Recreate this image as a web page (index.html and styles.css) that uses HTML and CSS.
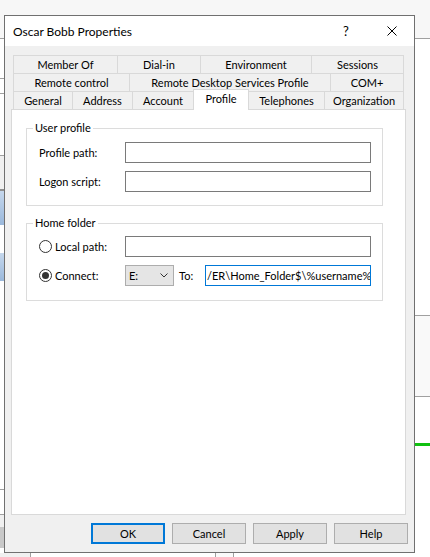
FILE: index.html
```html
<!DOCTYPE html>
<html>
<head>
<meta charset="utf-8">
<title>Oscar Bobb Properties</title>
<link rel="stylesheet" href="styles.css">
</head>
<body>
<div class="desktop">
  <div class="bg-top"></div>
  <div class="bg-right-band"></div>
  <div class="bg-green"></div>
  <div class="bg-left-a"></div>
  <div class="bg-left-b"></div>
  <div class="bg-left-blue1"></div>
  <div class="bg-left-blue2"></div>
  <div class="bg-left-c"></div>
  <div class="bg-bottom"></div>
</div>

<div class="dialog">
  <div class="titlebar">
    <span class="title">Oscar Bobb Properties</span>
    <span class="tb-btn tb-help">?</span>
    <span class="tb-btn tb-close">
      <svg width="10" height="10" viewBox="0 0 10 10"><path d="M0.5 0.5 L9.5 9.5 M9.5 0.5 L0.5 9.5" stroke="#000" stroke-width="1" fill="none"/></svg>
    </span>
  </div>
  <div class="body">
    <div class="tabs">
      <div class="tabrow r1">
        <div class="tab">Member Of</div>
        <div class="tab">Dial-in</div>
        <div class="tab">Environment</div>
        <div class="tab">Sessions</div>
      </div>
      <div class="tabrow r2">
        <div class="tab">Remote control</div>
        <div class="tab">Remote Desktop Services Profile</div>
        <div class="tab">COM+</div>
      </div>
      <div class="tabrow r3">
        <div class="tab">General</div>
        <div class="tab">Address</div>
        <div class="tab">Account</div>
        <div class="tab sel">Profile</div>
        <div class="tab">Telephones</div>
        <div class="tab">Organization</div>
      </div>
    </div>
    <div class="panel">
      <fieldset class="group g1">
        <legend>User profile</legend>
        <div class="row"><span class="lbl">Profile path:</span><div class="field"></div></div>
        <div class="row"><span class="lbl">Logon script:</span><div class="field"></div></div>
      </fieldset>
      <fieldset class="group g2">
        <legend>Home folder</legend>
        <div class="row"><span class="lbl radio-lbl"><span class="radio"></span>Local path:</span><div class="field"></div></div>
        <div class="row">
          <span class="lbl radio-lbl"><span class="radio on"></span>Connect:</span>
          <div class="combo"><span>E:</span><svg width="8" height="5" viewBox="0 0 8 5"><path d="M0.5 0.5 L4 4 L7.5 0.5" stroke="#333" stroke-width="1" fill="none"/></svg></div>
          <span class="to">To:</span>
          <div class="field focus">/ER\Home_Folder$\%username%</div>
        </div>
      </fieldset>
    </div>
    <div class="buttons">
      <div class="btn def">OK</div>
      <div class="btn">Cancel</div>
      <div class="btn">Apply</div>
      <div class="btn">Help</div>
    </div>
  </div>
</div>
</body>
</html>
```
FILE: styles.css
```css
* { box-sizing: border-box; }
html, body { margin: 0; padding: 0; }
body {
  width: 430px;
  height: 557px;
  overflow: hidden;
  background: #fff;
  font-family: Lato, "Noto Sans", sans-serif;
  font-size: 11px;
  color: #000;
  position: relative;
}

/* background desktop windows */
.desktop { position: absolute; inset: 0; }
.bg-top { position: absolute; left: 0; top: 0; width: 430px; height: 39px; background: #f7f7f7; border-bottom: 1px solid #a0a0a0; }
.bg-right-band { position: absolute; left: 415px; top: 315px; width: 15px; height: 82px; background: #f9f9f9; border-top: 1px solid #a0a0a0; border-bottom: 1px solid #a0a0a0; }
.bg-green { position: absolute; left: 415px; top: 443px; width: 15px; height: 3px; background: #10c010; }
.bg-left-a { position: absolute; left: 0; top: 78px; width: 4px; height: 16px; border-top: 1px solid #a0a0a0; border-bottom: 1px solid #a0a0a0; }
.bg-left-b { position: absolute; left: 0; top: 155px; width: 4px; height: 36px; border-top: 1px solid #a0a0a0; border-bottom: 2px solid #909090; background: #f0f0f0; }
.bg-left-blue1 { position: absolute; left: 0; top: 191px; width: 4px; height: 34px; background: linear-gradient(#c5d7ec, #9ab8db); }
.bg-left-blue2 { position: absolute; left: 0; top: 253px; width: 4px; height: 28px; background: linear-gradient(#c5d7ec, #9ab8db); }
.bg-left-c { position: absolute; left: 0; top: 489px; width: 4px; height: 59px; border-top: 1px solid #a0a0a0; background: linear-gradient(#fff 0 24px, #a0a0a0 24px 25px, #f0f0f0 25px 37px, #c8c8c8 37px); }
.bg-bottom { position: absolute; left: 0; top: 553px; width: 430px; height: 4px; background: linear-gradient(90deg, #f0f0f0 0 30px, #a0a0a0 30px 31px, #fff 31px 215px, #a0a0a0 215px 216px, #fafafa 216px 233px, #a0a0a0 233px 234px, #fff 234px); }

/* dialog window */
.dialog {
  position: absolute;
  left: 4px;
  top: 15px;
  width: 411px;
  height: 538px;
  border: 1px solid #707070;
  background: #f0f0f0;
  display: flex;
  flex-direction: column;
}
.titlebar {
  height: 30px;
  background: #fff;
  display: flex;
  align-items: center;
}
.title { flex: 1; padding-left: 8px; font-size: 12px; }
.tb-btn { height: 30px; display: flex; align-items: center; justify-content: center; }
.tb-help { width: 46px; font-size: 13px; }
.tb-close { width: 45px; }

.body { padding-top: 9px; }

.tabs { margin-left: 8px; width: 391px; }
.tabrow { display: grid; grid-template-rows: 18px; }
.r1 { grid-template-columns: 104px 83px 111px 93px; }
.r2 { grid-template-columns: 116px 201px 74px; }
.r3 { grid-template-columns: 59px 60px 61px 55px 76px 80px; }
.tab {
  border-top: 1px solid #d9d9d9;
  border-left: 1px solid #d9d9d9;
  text-align: center;
  line-height: 17px;
  white-space: nowrap;
}
.tab:last-child { border-right: 1px solid #d9d9d9; }
.tab.sel {
  background: #fff;
  margin-top: -2px;
  margin-right: -1px;
  height: 21px;
  border-right: 1px solid #d9d9d9;
  position: relative;
  z-index: 1;
}

.panel {
  margin-left: 6px;
  width: 395px;
  height: 406px;
  border: 1px solid #d9d9d9;
  background: #fff;
  padding: 10px 0 0 14px;
}

.group {
  margin: 0;
  width: 357px;
  min-width: 0;
  border: 1px solid #dcdcdc;
  padding: 6px 11px 13px 12px;
}
.group legend { padding: 0 2px; margin-left: -6px; line-height: 16px; }
.g2 { margin-top: 9px; padding-top: 5px; padding-bottom: 14px; }

.row { display: flex; align-items: center; height: 21px; }
.row + .row { margin-top: 8px; }
.lbl { width: 86px; flex: none; white-space: nowrap; }
.radio-lbl { display: flex; align-items: center; gap: 3px; }
.radio {
  width: 13px;
  height: 13px;
  border: 1px solid #333;
  border-radius: 50%;
  background: #fff;
  display: flex;
  align-items: center;
  justify-content: center;
  flex: none;
}
.radio.on::after { content: ""; width: 7px; height: 7px; border-radius: 50%; background: #333; }

.field {
  width: 246px;
  height: 21px;
  border: 1px solid #7a7a7a;
  background: #fff;
  flex: none;
}
.field.focus {
  width: 166px;
  margin-left: auto;
  border-color: #0078d7;
  padding-left: 1px;
  line-height: 19px;
  white-space: nowrap;
  overflow: hidden;
}
.combo {
  width: 49px;
  height: 21px;
  flex: none;
  border: 1px solid #adadad;
  background: #e5e5e5;
  display: flex;
  align-items: center;
  justify-content: space-between;
  padding: 0 5px 0 3px;
}
.to { margin-left: 5px; }

.buttons {
  display: flex;
  justify-content: flex-end;
  gap: 7px;
  padding: 8px 6px 0 0;
}
.btn {
  width: 74px;
  height: 21px;
  border: 1px solid #adadad;
  background: #e1e1e1;
  display: flex;
  align-items: center;
  justify-content: center;
}
.btn.def { border: 2px solid #0078d7; }
```
